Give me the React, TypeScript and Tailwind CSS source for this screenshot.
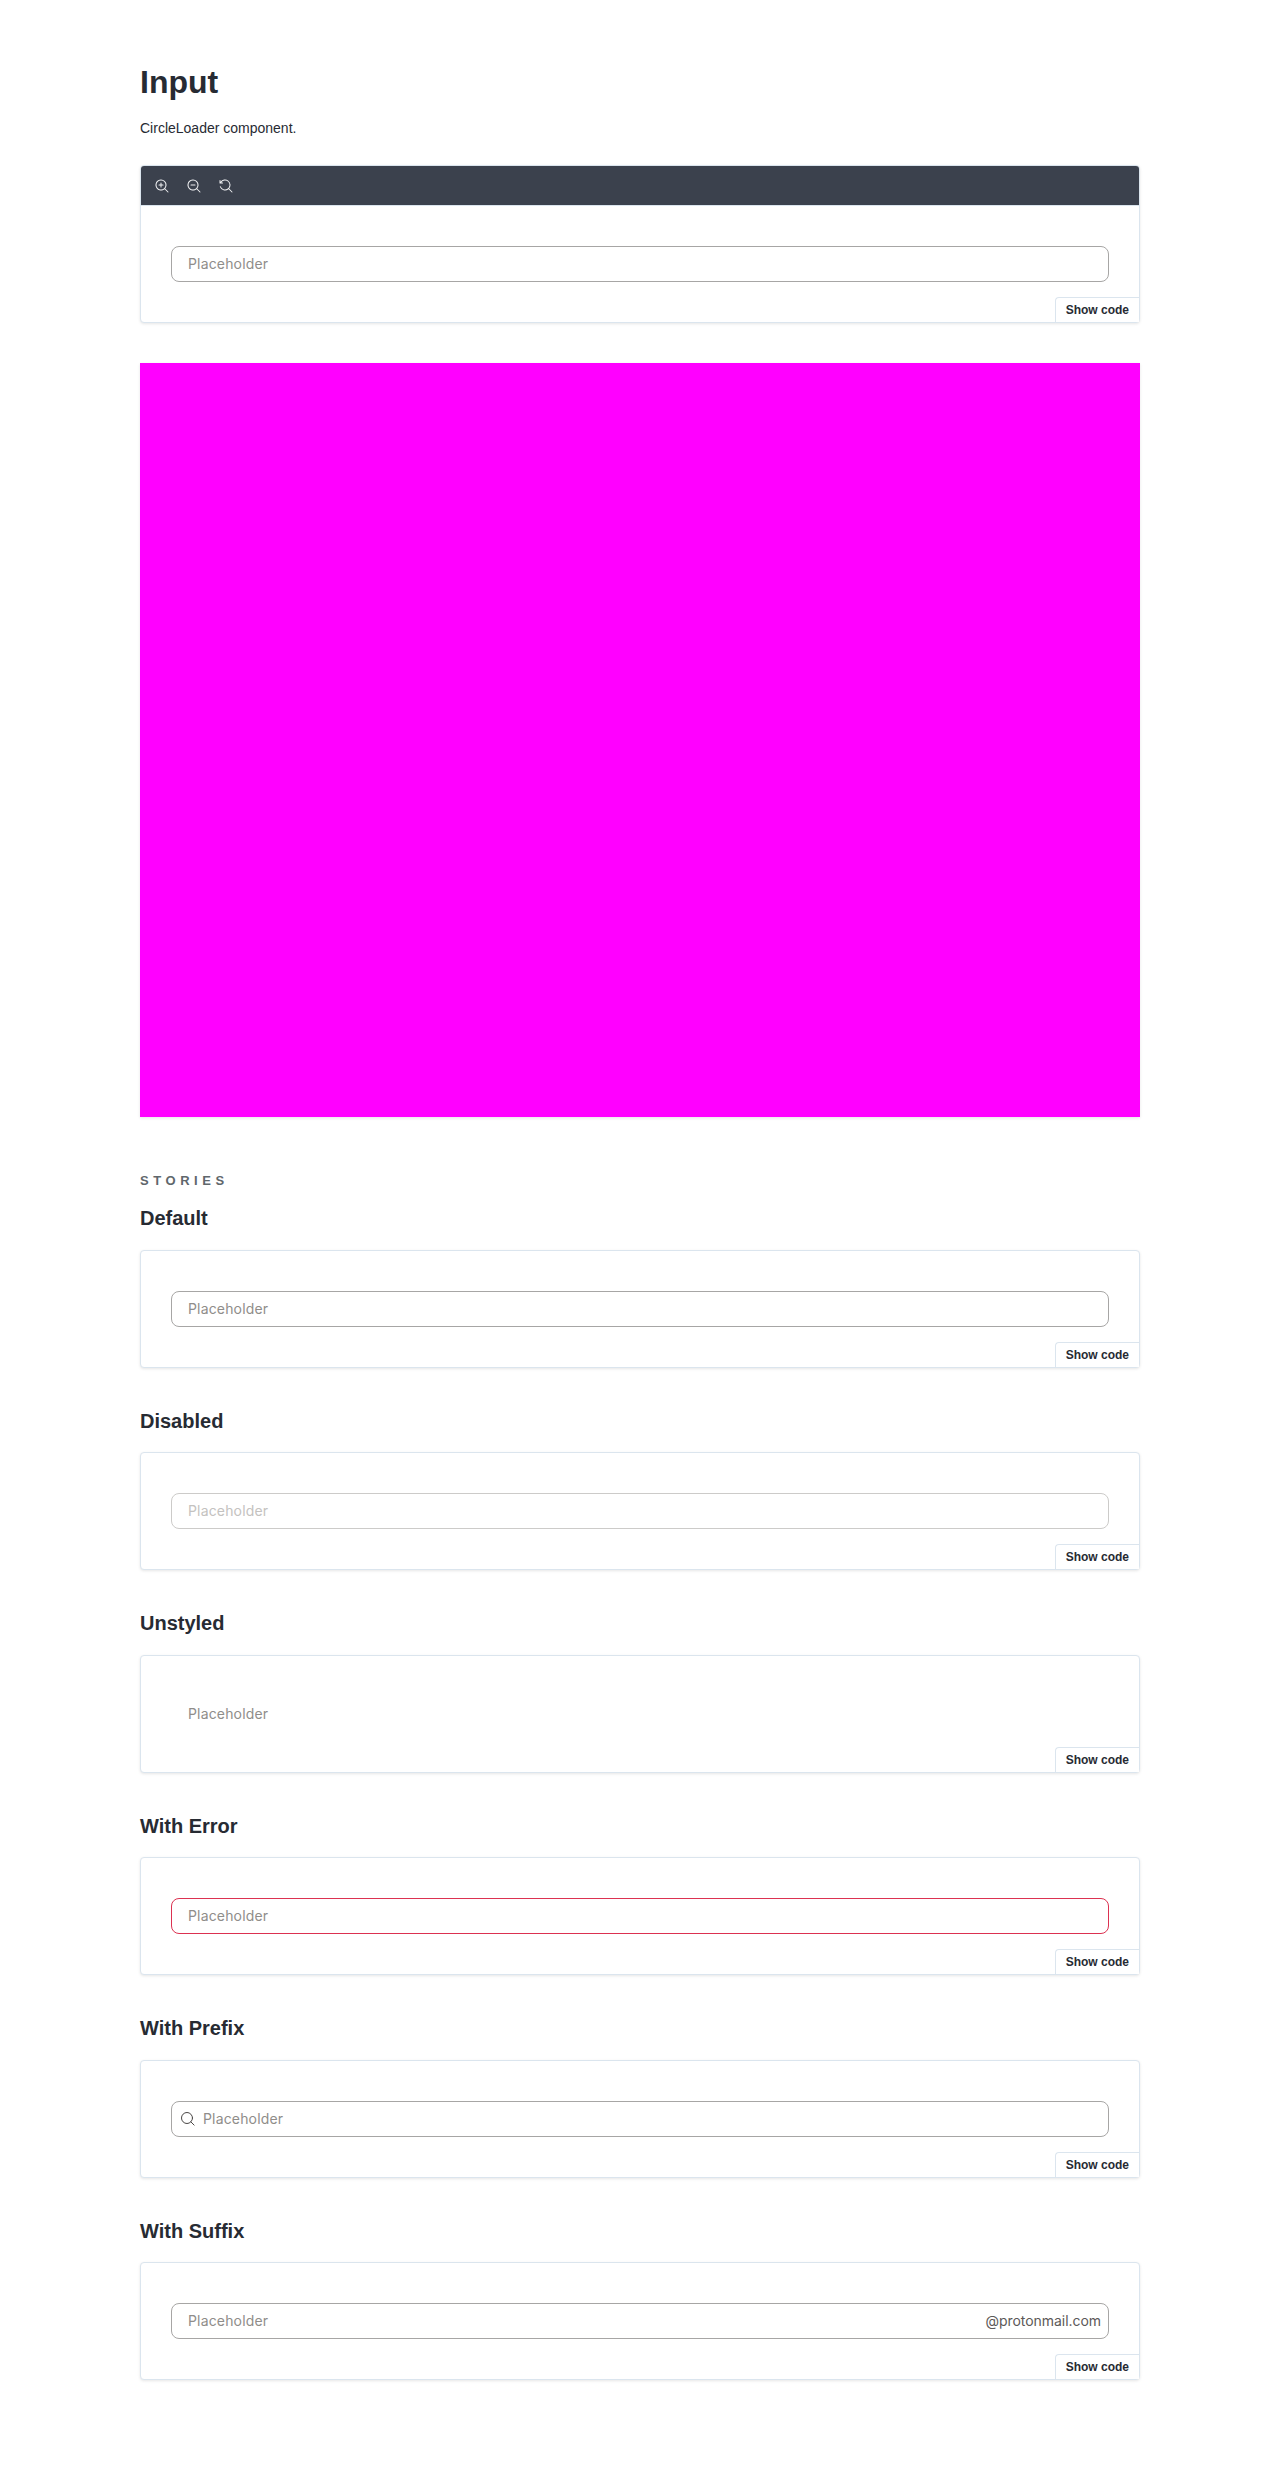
import React from "react";

const field =
  "flex h-[35.75px] items-start rounded-lg border bg-white pt-[6px] pr-[7px] font-['Inter',sans-serif] text-[14px] leading-[21px]";

type Kind = "default" | "disabled" | "unstyled" | "error" | "prefix" | "suffix";

const borders: Record<Kind, string> = {
  default: "border-[#a7a6a5]",
  disabled: "border-[#cccbc9]",
  unstyled: "border-transparent",
  error: "border-[#dc3251]",
  prefix: "border-[#a7a6a5]",
  suffix: "border-[#a7a6a5]",
};

function SearchIcon() {
  return (
    <svg width="14" height="14" viewBox="0 0 14 14" fill="none" stroke="#4a4746" strokeLinecap="round">
      <circle cx="6" cy="6" r="5.5" />
      <path d="M9.9 9.9l3.2 3.2" />
    </svg>
  );
}

function Field({ kind }: { kind: Kind }) {
  return (
    <div className={`${field} ${borders[kind]} ${kind === "prefix" ? "pl-[8.5px]" : "pl-4"}`}>
      {kind === "prefix" && (
        <span className="mt-[4px] mr-[8.5px] flex">
          <SearchIcon />
        </span>
      )}
      <span className={`grow tracking-[0.16px] ${kind === "disabled" ? "text-[#c4c2c0]" : "text-[#8f8d8a]"}`}>
        Placeholder
      </span>
      {kind === "suffix" && <span className="tracking-[-0.05px] text-[#5c5958]">@protonmail.com</span>}
    </div>
  );
}

const lens =
  "M9.544 10.206a5.5 5.5 0 11.662-.662.5.5 0 01.148.102l3 3a.5.5 0 01-.708.708l-3-3a.5.5 0 01-.102-.148zM10.5 6a4.5 4.5 0 11-9 0 4.5 4.5 0 019 0z";

const tools = [
  ["M6 3.5a.5.5 0 01.5.5v1.5H8a.5.5 0 010 1H6.5V8a.5.5 0 01-1 0V6.5H4a.5.5 0 010-1h1.5V4a.5.5 0 01.5-.5z", lens],
  ["M4 5.5a.5.5 0 000 1h4a.5.5 0 000-1H4z", lens],
  [
    "M1.5 2.837V1.5a.5.5 0 00-1 0V4a.5.5 0 00.5.5h2.5a.5.5 0 000-1H2.258a4.5 4.5 0 11-.496 4.016.5.5 0 10-.942.337 5.502 5.502 0 008.724 2.353.5.5 0 00.102.148l3 3a.5.5 0 00.708-.708l-3-3a.5.5 0 00-.148-.102A5.5 5.5 0 101.5 2.837z",
  ],
];

function Toolbar() {
  return (
    <div className="flex h-10 items-center gap-[18px] rounded-t-[3px] border-b border-[#dbe5ee] bg-[#3b414d] pl-[14px]">
      {tools.map((paths) => (
        <svg key={paths[0]} width="14" height="14" viewBox="0 0 14 14" fill="#f1f2f4" fillRule="evenodd">
          {paths.map((d) => (
            <path key={d} d={d} />
          ))}
        </svg>
      ))}
    </div>
  );
}

function Preview({ kind = "default", toolbar = false }: { kind?: Kind; toolbar?: boolean }) {
  return (
    <div className="relative rounded-[4px] border border-[#dbe5ee] bg-white shadow-[0_1px_3px_0_rgba(0,0,0,0.1)]">
      {toolbar && <Toolbar />}
      <div className="px-[30px] py-10">
        <Field kind={kind} />
      </div>
      <button className="absolute right-0 bottom-0 h-[25px] rounded-tl-[4px] border-t border-l border-[#dbe5ee] bg-white px-[10px] text-[12px] leading-4 font-bold text-[#272b33]">
        Show code
      </button>
    </div>
  );
}

const stories: { name: string; kind: Kind }[] = [
  { name: "Default", kind: "default" },
  { name: "Disabled", kind: "disabled" },
  { name: "Unstyled", kind: "unstyled" },
  { name: "With Error", kind: "error" },
  { name: "With Prefix", kind: "prefix" },
  { name: "With Suffix", kind: "suffix" },
];

export default function App() {
  return (
    <div className="min-h-[2484px] bg-white py-16 font-['Liberation_Sans',sans-serif] text-[#272b33]">
      <main className="mx-auto w-[1000px]">
        <h1 className="mb-4 text-[32px] leading-9 font-bold">Input</h1>
        <p className="mb-[25px] text-[14px] leading-6">CircleLoader component.</p>
        <Preview toolbar />
        <div className="mt-[40.25px] h-[754px] bg-[#ff00ff] shadow-[0_1px_3px_0_rgba(0,0,0,0.1)]" />
        <h2 className="mt-[52px] text-[13px] leading-6 font-bold tracking-[0.35em] text-[#5f676c] uppercase">
          Stories
        </h2>
        <div className="mt-[13.3125px] flex flex-col gap-[41.03125px]">
          {stories.map((s) => (
            <section key={s.name}>
              <h3 className="mb-[19.6875px] text-[20px] leading-6 font-bold">{s.name}</h3>
              <Preview kind={s.kind} />
            </section>
          ))}
        </div>
      </main>
    </div>
  );
}
